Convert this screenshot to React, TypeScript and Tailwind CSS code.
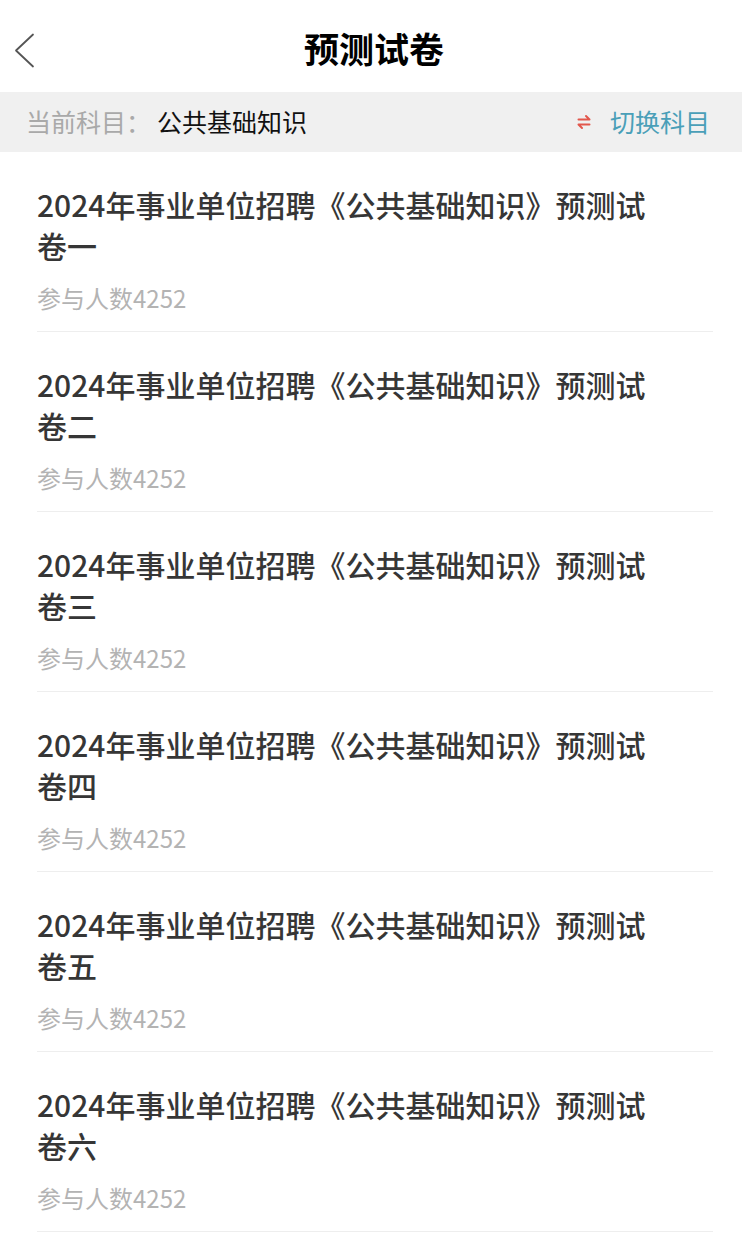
import React from 'react';

const papers = ['一', '二', '三', '四', '五', '六'];

const SwapIcon = () => (
  <svg width="14" height="16" viewBox="0 0 14 16" fill="none" stroke="#e2574c" strokeWidth="2" strokeLinecap="round" strokeLinejoin="round">
    <path d="M1.5 5.5 H12.5 L9 2" />
    <path d="M12.5 10.5 H1.5 L5 14" />
  </svg>
);

const PaperRow: React.FC<{ no: string }> = ({ no }) => (
  <div className="pt-[32px] pb-[17px] border-b border-[#eeeeee]">
    <h3 className="max-w-[624px] text-[30px] leading-[41px] text-[#363636] font-medium">
      2024年事业单位招聘《公共基础知识》预测试卷{no}
    </h3>
    <p className="mt-[16px] text-[24px] leading-[32px] text-[#b3b3b3]">参与人数4252</p>
  </div>
);

export default function App() {
  return (
    <div
      className="w-[742px] min-h-screen bg-white"
      style={{ fontFamily: '"Noto Sans CJK SC", "Noto Sans", sans-serif' }}
    >
      {/* Header */}
      <div className="h-[92px] grid grid-cols-[90px_1fr_90px] items-center">
        <button className="pl-[14px] pt-[10px] flex items-center">
          <svg width="22" height="36" viewBox="0 0 22 36" fill="none" stroke="#555555" strokeWidth="1.8" strokeLinecap="round" strokeLinejoin="round">
            <path d="M19 1.5 L2 17.5 L19 33.5" />
          </svg>
        </button>
        <h1 className="text-center text-[35px] font-bold text-black pt-[4px] pl-[6px]">预测试卷</h1>
        <div />
      </div>

      {/* Subject bar */}
      <div className="h-[60px] bg-[#f0f0f0] flex items-center justify-between pl-[26px] pr-[32px]">
        <div className="flex items-center text-[25px]">
          <span className="text-[#a9a9a9]">当前科目：</span>
          <span className="ml-[6px] text-[#111111]">公共基础知识</span>
        </div>
        <div className="flex items-center text-[25px] text-[#4a9fb8]">
          <SwapIcon />
          <span className="ml-[19px]">切换科目</span>
        </div>
      </div>

      {/* Paper list */}
      <div className="ml-[37px] mr-[29px]">
        {papers.map(no => (
          <PaperRow key={no} no={no} />
        ))}
      </div>
    </div>
  );
}
